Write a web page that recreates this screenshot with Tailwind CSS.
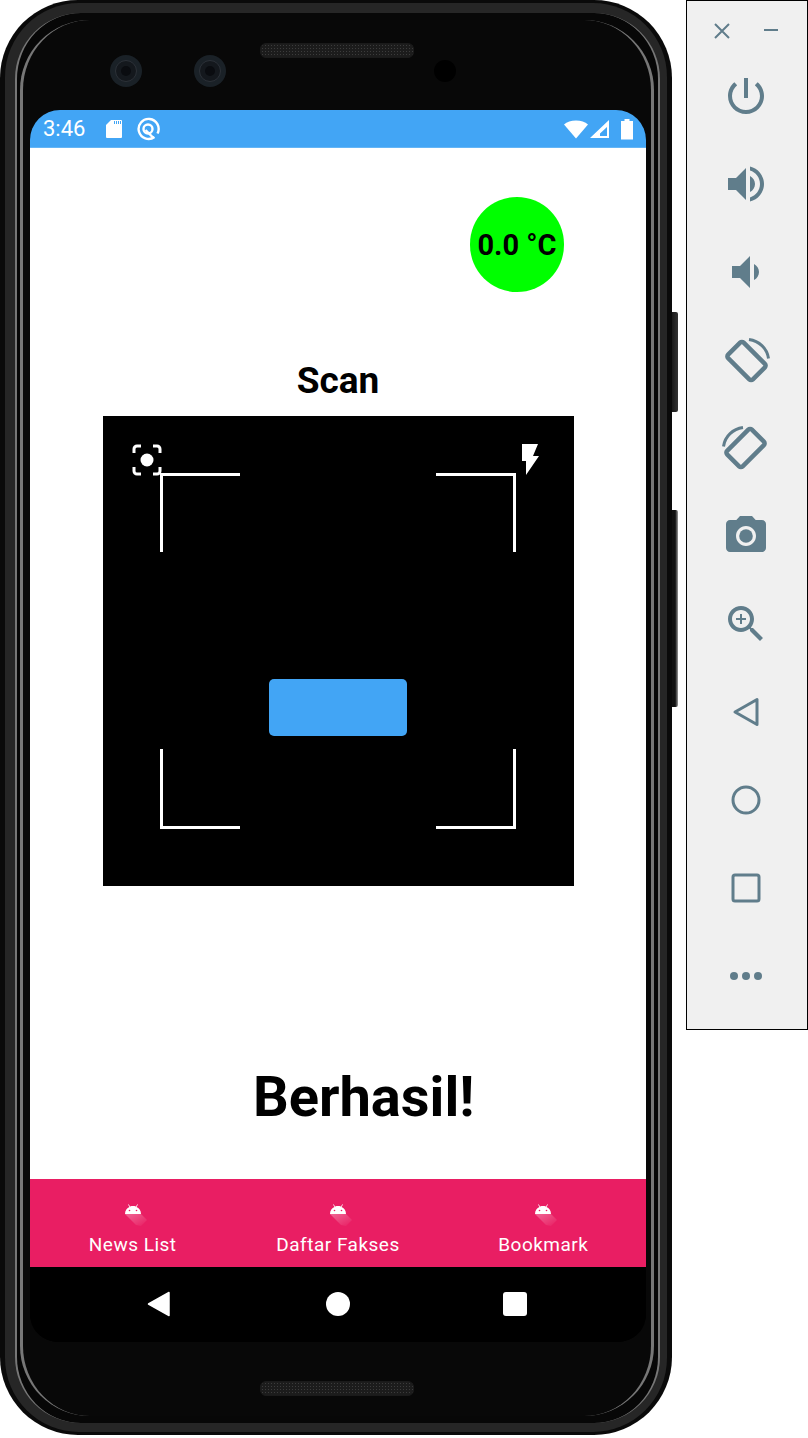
<!DOCTYPE html>
<html lang="id">
<head>
    <meta charset="UTF-8">
    <meta name="viewport" content="width=device-width, initial-scale=1.0">
    <title>Scan</title>
    <script src="https://cdn.jsdelivr.net/npm/@tailwindcss/browser@4"></script>
</head>
<body class="bg-white w-[808px] h-[1438px] overflow-hidden flex items-start font-[Roboto,sans-serif]">

    <!-- phone -->
    <div class="relative w-[678px] h-[1438px] shrink-0">
        <!-- side buttons -->
        <div class="absolute left-[670px] top-[312px] w-[8px] h-[100px] rounded-r-[2px] bg-gradient-to-r from-[#111111] to-[#333333]"></div>
        <div class="absolute left-[670px] top-[510px] w-[8px] h-[197px] rounded-r-[2px] bg-[linear-gradient(90deg,#111_0_65%,#999_100%)]"></div>

        <!-- frame rings -->
        <div class="absolute left-0 top-0 w-[672px] h-[1435px] rounded-[78px] bg-[#0a0a0a]"></div>
        <div class="absolute left-[5px] top-[3px] w-[662px] h-[1429px] rounded-[74px] bg-[#262626]"></div>
        <div class="absolute left-[15px] top-[13px] w-[645px] h-[1410px] rounded-[66px] bg-[#070707] border-x-2 border-x-[#777777]"></div>
        <div class="absolute left-[20px] top-[20px] w-[634px] h-[1396px] rounded-[70px] bg-[#080808] border-x-[3px] border-x-[#777777]"></div>

        <!-- content -->
        <div class="relative ml-[30px] w-[616px] flex flex-col">
            <!-- top bezel -->
            <div class="h-[110px] flex items-start">
                <div class="ml-[80px] mt-[55px] size-8 rounded-full bg-[#1a2127] flex items-center justify-center">
                    <div class="size-[22px] rounded-full bg-[#14181d] border border-[#2c3138] flex items-center justify-center">
                        <div class="size-[10px] rounded-full bg-[#0a0c10]"></div>
                    </div>
                </div>
                <div class="ml-[52px] mt-[55px] size-8 rounded-full bg-[#1a2127] flex items-center justify-center">
                    <div class="size-[22px] rounded-full bg-[#14181d] border border-[#2c3138] flex items-center justify-center">
                        <div class="size-[10px] rounded-full bg-[#0a0c10]"></div>
                    </div>
                </div>
                <div class="ml-[34px] mt-[43px] w-[154px] h-[15px] rounded-[6px] border border-[#1a1a1a] bg-[#1c1c1c] bg-[radial-gradient(#3c3c3c_1px,transparent_1px)] bg-[length:3px_3px]"></div>
                <div class="ml-[20px] mt-[60px] size-[22px] rounded-full bg-black"></div>
            </div>

            <!-- screen -->
            <div class="h-[1232px] rounded-t-[30px] rounded-b-[28px] overflow-hidden bg-black flex flex-col">
                <!-- status bar -->
                <div class="h-[38px] bg-[#42a5f5] flex items-center text-white pl-[13px] pr-[12px] border-b border-[#64b5f6]">
                    <span class="text-[22px] leading-none w-[42px] mt-[1px]">3:46</span>
                    <svg class="ml-[20px]" width="18" height="20" viewBox="0 0 18 20"><path fill="#fff" d="M6 1h10a1 1 0 0 1 1 1v16a1 1 0 0 1-1 1H2a1 1 0 0 1-1-1V6z"/><path stroke="#42a5f5" stroke-width="1" d="M9.500 2v3M11.500 2v3M13.500 2v3M15.500 2v3"/></svg>
                    <svg class="ml-[13px]" width="24" height="24" viewBox="0 0 24 24" fill="none" stroke="#fff" stroke-width="2.400"><path d="M18.500 20a10 10 0 1 1 3-3.500"/><circle cx="12" cy="12" r="4.500"/><path d="M9.500 13l8 8"/></svg>
                    <svg class="ml-auto" width="24" height="20" viewBox="0 0 24 20"><path fill="#fff" d="M0 5.500C3 3 7 1.500 12 1.500s9 1.500 12 4L12 19.500z"/></svg>
                    <svg class="ml-[2px]" width="20" height="20" viewBox="0 0 20 20"><path fill="#fff" fill-rule="evenodd" d="M0 19L19 1v18zM10 17h7V8l-7 6.500z"/></svg>
                    <svg class="ml-[10px]" width="14" height="22" viewBox="0 0 14 22"><path fill="#fff" d="M4.500 1h5v2H13v18.500H1V3h3.500z"/></svg>
                </div>

                <!-- page -->
                <div class="h-[1031px] bg-white flex flex-col text-black">
                    <div class="self-end mt-[49px] mr-[82px] w-[94px] h-[95px] pt-[3px] rounded-full bg-[#00ff00] flex items-center justify-center font-bold text-[29px] whitespace-nowrap">0.0 °C</div>
                    <h1 class="mt-[67px] text-center font-bold text-[37px] leading-[44px]">Scan</h1>

                    <!-- scanner -->
                    <div class="relative mt-[13px] ml-[73px] w-[471px] h-[470px] bg-black flex items-center justify-center">
                        <svg class="absolute left-[29px] top-[28px]" width="30" height="32" viewBox="0 0 30 32" fill="none" stroke="#fff" stroke-width="3">
                            <path d="M2 9V5a3 3 0 0 1 3-3h4M21 2h4a3 3 0 0 1 3 3v4M28 23v4a3 3 0 0 1-3 3h-4M9 30H5a3 3 0 0 1-3-3v-4"/>
                            <circle cx="15" cy="16" r="6.500" fill="#fff" stroke="none"/>
                        </svg>
                        <svg class="absolute left-[418px] top-[28px]" width="18" height="32" viewBox="0 0 18 32"><path fill="#fff" d="M1 0h16l-5 12h6L5 31V17H1z"/></svg>

                        <div class="absolute left-[57px] top-[57px] w-[80px] h-[79px] border-l-[3px] border-t-[3px] border-white"></div>
                        <div class="absolute left-[333px] top-[57px] w-[80px] h-[79px] border-r-[3px] border-t-[3px] border-white"></div>
                        <div class="absolute left-[57px] top-[333px] w-[80px] h-[80px] border-l-[3px] border-b-[3px] border-white"></div>
                        <div class="absolute left-[333px] top-[333px] w-[80px] h-[80px] border-r-[3px] border-b-[3px] border-white"></div>

                        <div class="w-[138px] h-[57px] rounded-[5px] bg-[#42a5f5] -ml-[1px] mt-[113px]"></div>
                    </div>

                    <p class="mt-[179px] ml-[223px] font-bold text-[56px] leading-[64px] whitespace-nowrap">Berhasil!</p>
                </div>

                <!-- bottom tabs -->
                <div class="h-[88px] bg-[#e91e63] grid grid-cols-3 text-white text-[19px] tracking-[0.5px] leading-none text-center">
                    <div class="flex flex-col items-center pt-[21px]">
                        <svg width="28" height="28" viewBox="0 0 28 28"><defs><linearGradient id="ls1" x1="0" y1="0" x2="1" y2="1"><stop offset="0" stop-color="#fff" stop-opacity=".32"/><stop offset="1" stop-color="#fff" stop-opacity="0"/></linearGradient></defs><path fill="url(#ls1)" d="M6 14h16l6 6-6 6-5-1z"/><path fill="#fff" d="M6 14c0-3.500 2-6 4.500-7L9 4.500l.5-.3 1.700 2.300c1.700-.6 3.900-.6 5.600 0l1.700-2.300.5.3L17.500 7C20 8 22 10.500 22 14z"/><circle cx="10.500" cy="10.500" r=".8" fill="#e91e63"/><circle cx="17.500" cy="10.500" r=".8" fill="#e91e63"/></svg>
                        <span class="mt-[7px]">News List</span>
                    </div>
                    <div class="flex flex-col items-center pt-[21px]">
                        <svg width="28" height="28" viewBox="0 0 28 28"><path fill="url(#ls1)" d="M6 14h16l6 6-6 6-5-1z"/><path fill="#fff" d="M6 14c0-3.500 2-6 4.500-7L9 4.500l.5-.3 1.700 2.300c1.700-.6 3.900-.6 5.600 0l1.700-2.300.5.3L17.500 7C20 8 22 10.500 22 14z"/><circle cx="10.500" cy="10.500" r=".8" fill="#e91e63"/><circle cx="17.500" cy="10.500" r=".8" fill="#e91e63"/></svg>
                        <span class="mt-[7px]">Daftar Fakses</span>
                    </div>
                    <div class="flex flex-col items-center pt-[21px]">
                        <svg width="28" height="28" viewBox="0 0 28 28"><path fill="url(#ls1)" d="M6 14h16l6 6-6 6-5-1z"/><path fill="#fff" d="M6 14c0-3.500 2-6 4.500-7L9 4.500l.5-.3 1.700 2.300c1.700-.6 3.900-.6 5.600 0l1.700-2.300.5.3L17.500 7C20 8 22 10.500 22 14z"/><circle cx="10.500" cy="10.500" r=".8" fill="#e91e63"/><circle cx="17.500" cy="10.500" r=".8" fill="#e91e63"/></svg>
                        <span class="mt-[7px]">Bookmark</span>
                    </div>
                </div>

                <!-- android nav -->
                <div class="flex-1 bg-black flex items-center pb-[1px]">
                    <svg class="ml-[117px]" width="24" height="26" viewBox="0 0 24 26"><path fill="#fff" stroke="#fff" stroke-width="1.500" stroke-linejoin="round" d="M1.500 13L22 1.500v23z"/></svg>
                    <div class="ml-[155px] size-6 rounded-full bg-white"></div>
                    <div class="ml-[153px] size-6 rounded-[3px] bg-white"></div>
                </div>
            </div>

            <!-- bottom bezel -->
            <div class="h-[96px] flex items-start">
                <div class="ml-[230px] mt-[39px] w-[154px] h-[15px] rounded-[6px] border border-[#1a1a1a] bg-[#1c1c1c] bg-[radial-gradient(#3c3c3c_1px,transparent_1px)] bg-[length:3px_3px]"></div>
            </div>
        </div>
    </div>

    <!-- emulator toolbar -->
    <div class="ml-[8px] w-[122px] h-[1030px] pr-[2px] bg-[#f0f0f0] border border-black flex flex-col items-center text-[#607d8b]">
        <div class="h-[51px] w-full flex items-start pt-[22px]">
            <svg class="ml-[26px]" width="18" height="16" viewBox="0 0 18 16" fill="none" stroke="currentColor" stroke-width="2"><path d="M2 1l14 14M16 1L2 15"/></svg>
            <svg class="ml-[32px]" width="16" height="16" viewBox="0 0 16 16" fill="none" stroke="currentColor" stroke-width="2"><path d="M1 7h14"/></svg>
        </div>
        <div class="h-[88px] flex items-center"><svg width="48" height="48" viewBox="0 0 24 24" fill="currentColor"><path d="M13 3h-2v10h2V3zm4.830 2.170l-1.420 1.420C17.990 7.860 19 9.810 19 12c0 3.870-3.130 7-7 7s-7-3.130-7-7c0-2.190 1.010-4.140 2.580-5.420L6.170 5.170C4.230 6.820 3 9.260 3 12c0 4.970 4.030 9 9 9s9-4.030 9-9c0-2.740-1.230-5.180-3.170-6.830z"/></svg></div>
        <div class="h-[88px] flex items-center"><svg width="48" height="48" viewBox="0 0 24 24" fill="currentColor"><path d="M3 9v6h4l5 5V4L7 9H3zm13.500 3c0-1.770-1.020-3.290-2.500-4.030v8.050c1.480-.73 2.500-2.250 2.500-4.020zM14 3.230v2.060c2.890.86 5 3.540 5 6.710s-2.110 5.850-5 6.710v2.060c4.010-.91 7-4.490 7-8.770s-2.990-7.860-7-8.770z"/></svg></div>
        <div class="h-[88px] flex items-center"><svg width="48" height="48" viewBox="0 0 24 24" fill="currentColor"><path d="M18.500 12c0-1.770-1.020-3.290-2.500-4.030v8.050c1.480-.73 2.500-2.250 2.500-4.020zM5 9v6h4l5 5V4L9 9H5z"/></svg></div>
        <div class="h-[88px] flex items-center"><svg width="48" height="48" viewBox="0 0 48 48" fill="none" stroke="currentColor"><rect x="7" y="14" width="35" height="22" rx="2.500" stroke-width="4.500" transform="rotate(45 24.500 25)"/><path stroke-width="3" d="M27 3.500C37 5 45 12 46.500 22.500"/></svg></div>
        <div class="h-[88px] flex items-center"><svg width="48" height="48" viewBox="0 0 48 48" fill="none" stroke="currentColor"><rect x="6" y="13" width="35" height="22" rx="2.500" stroke-width="4.500" transform="rotate(-45 23.500 24)"/><path stroke-width="3" d="M21 3.500C11 5 3 12 1.500 22.500"/></svg></div>
        <div class="h-[88px] flex items-center"><svg width="48" height="48" viewBox="0 0 24 24" fill="currentColor"><path d="M9 2L7.170 4H4c-1.100 0-2 .9-2 2v12c0 1.100.9 2 2 2h16c1.100 0 2-.9 2-2V6c0-1.100-.9-2-2-2h-3.170L15 2H9zm3 15c-2.760 0-5-2.240-5-5s2.240-5 5-5 5 2.240 5 5-2.240 5-5 5z"/><circle cx="12" cy="12" r="3.400"/></svg></div>
        <div class="h-[88px] flex items-center"><svg width="48" height="48" viewBox="0 0 24 24" fill="currentColor"><path d="M15.500 14h-.79l-.28-.27C15.410 12.590 16 11.110 16 9.500 16 5.910 13.090 3 9.500 3S3 5.910 3 9.500 5.910 16 9.500 16c1.610 0 3.090-.59 4.230-1.570l.27.28v.79l5 4.990L20.490 19l-4.990-5zm-6 0C7.010 14 5 11.990 5 9.500S7.010 5 9.500 5 14 7.010 14 9.500 11.990 14 9.500 14z"/><path d="M12 10h-2v2H9v-2H7V9h2V7h1v2h2v1z"/></svg></div>
        <div class="h-[88px] flex items-center"><svg width="48" height="48" viewBox="0 0 48 48" fill="none" stroke="currentColor" stroke-width="3" stroke-linejoin="round"><path d="M13 24L35 11.500v25z"/></svg></div>
        <div class="h-[88px] flex items-center"><svg width="48" height="48" viewBox="0 0 48 48" fill="none" stroke="currentColor" stroke-width="3"><circle cx="24" cy="24" r="13"/></svg></div>
        <div class="h-[88px] flex items-center"><svg width="48" height="48" viewBox="0 0 48 48" fill="none" stroke="currentColor" stroke-width="3"><rect x="11" y="11" width="26" height="26" rx="2"/></svg></div>
        <div class="h-[88px] flex items-center"><svg width="48" height="48" viewBox="0 0 48 48" fill="currentColor"><circle cx="12" cy="24" r="4"/><circle cx="24" cy="24" r="4"/><circle cx="36" cy="24" r="4"/></svg></div>
    </div>

</body>
</html>
